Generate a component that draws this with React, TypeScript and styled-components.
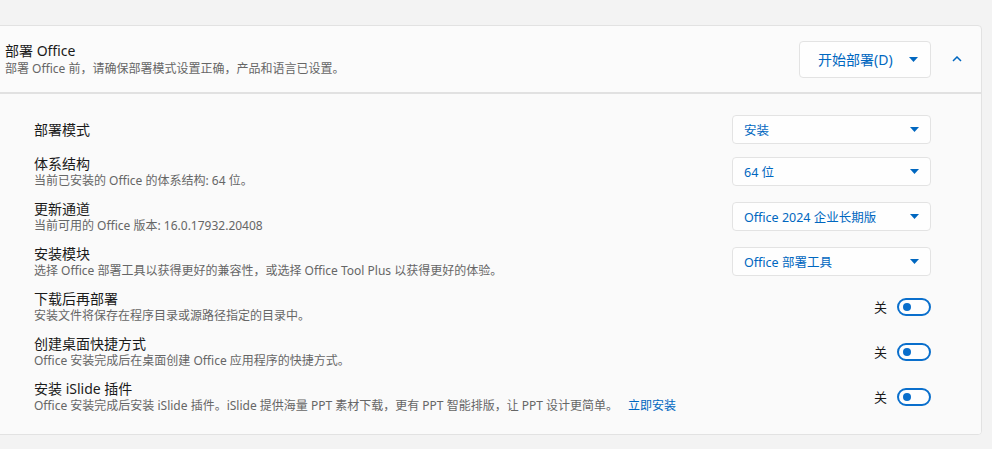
import React from "react";
import styled, { createGlobalStyle } from "styled-components";

const Global = createGlobalStyle`
  html, body { margin: 0; padding: 0; background: #f3f3f3; }
  body {
    font-family: "Noto Sans", "Noto Sans CJK SC", sans-serif;
    color: #1b1b1b;
    overflow: hidden;
  }
`;

const Page = styled.div`
  width: 992px;
  height: 449px;
  padding: 25px 10px 0 0;
  box-sizing: border-box;
  overflow: hidden;
`;

const Card = styled.section`
  margin-left: -12px;
  border: 1px solid #e2e2e2;
  border-radius: 4px;
  background: #fbfbfb;
  overflow: hidden;
`;

const Header = styled.div`
  display: flex;
  align-items: center;
  height: 66px;
  padding: 0 12px 0 16px;
  border-bottom: 2px solid #e1e1e1;
  box-sizing: content-box;
`;

const HeaderText = styled.div`
  flex: 1;
  display: flex;
  flex-direction: column;
`;

const Title = styled.div`
  font-size: 14px;
  line-height: 20px;
  color: #1a1a1a;
`;

const Desc = styled.div`
  font-size: 12px;
  line-height: 16px;
  color: #666666;
`;

const SplitButton = styled.button`
  display: flex;
  align-items: center;
  width: 132px;
  height: 37px;
  padding: 0 12px 0 18px;
  box-sizing: border-box;
  border: 1px solid #e3e3e3;
  border-radius: 4px;
  background: #fefefe;
  font-family: inherit;
  font-size: 14px;
  color: #0067c0;
  cursor: pointer;
`;

const ButtonLabel = styled.span`
  flex: 1;
  text-align: left;
`;

const Chevron = styled.div`
  width: 24px;
  margin-left: 14px;
  display: flex;
  justify-content: center;
  align-items: center;
`;

const Body = styled.div`
  display: flex;
  flex-direction: column;
  gap: 10px;
  padding: 21px 50px 20px 45px;
  background: #fafafa;
`;

const Row = styled.div`
  display: flex;
  align-items: center;
  min-height: 29px;
`;

const RowText = styled.div`
  flex: 1;
  display: flex;
  flex-direction: column;
`;

const Label = styled.div`
  font-size: 14px;
  line-height: 19px;
  color: #1a1a1a;
`;

const RowDesc = styled.div`
  font-size: 12px;
  line-height: 16px;
  color: #666666;
`;

const Link = styled.a`
  color: #0067c0;
  margin-left: 10px;
  text-decoration: none;
`;

const Select = styled.div`
  display: flex;
  align-items: center;
  width: 199px;
  height: 29px;
  box-sizing: border-box;
  padding: 0 11px 0 11px;
  border: 1px solid #e3e3e3;
  border-radius: 4px;
  background: #fefefe;
  font-size: 12.5px;
  color: #0067c0;
`;

const SelectValue = styled.span`
  flex: 1;
`;

const ToggleWrap = styled.div`
  display: flex;
  align-items: center;
  gap: 10px;
`;

const ToggleText = styled.span`
  font-size: 13px;
  color: #1a1a1a;
`;

const Toggle = styled.div`
  position: relative;
  width: 34px;
  height: 18px;
  box-sizing: border-box;
  border: 2px solid #0a6fcc;
  border-radius: 9px;
  background: #fefefe;
  &::after {
    content: "";
    position: absolute;
    left: 4px;
    top: 3px;
    width: 8px;
    height: 8px;
    border-radius: 50%;
    background: #0a6fcc;
  }
`;

const Caret = () => (
  <svg width="9" height="5" viewBox="0 0 9 5">
    <path d="M0 0 H9 L4.5 5 Z" fill="#0067c0" />
  </svg>
);

const ChevronUp = () => (
  <svg width="10" height="6" viewBox="0 0 10 6">
    <path d="M1 5 L5 1 L9 5" fill="none" stroke="#0067c0" strokeWidth="1.5" />
  </svg>
);

type SelectRow = { kind: "select"; label: string; desc?: React.ReactNode; value: string };
type ToggleRow = { kind: "toggle"; label: string; desc: React.ReactNode };

const rows: (SelectRow | ToggleRow)[] = [
  { kind: "select", label: "部署模式", value: "安装" },
  { kind: "select", label: "体系结构", desc: "当前已安装的 Office 的体系结构: 64 位。", value: "64 位" },
  { kind: "select", label: "更新通道", desc: "当前可用的 Office 版本: 16.0.17932.20408", value: "Office 2024 企业长期版" },
  {
    kind: "select",
    label: "安装模块",
    desc: "选择 Office 部署工具以获得更好的兼容性，或选择 Office Tool Plus 以获得更好的体验。",
    value: "Office 部署工具",
  },
  { kind: "toggle", label: "下载后再部署", desc: "安装文件将保存在程序目录或源路径指定的目录中。" },
  { kind: "toggle", label: "创建桌面快捷方式", desc: "Office 安装完成后在桌面创建 Office 应用程序的快捷方式。" },
  {
    kind: "toggle",
    label: "安装 iSlide 插件",
    desc: (
      <>
        Office 安装完成后安装 iSlide 插件。iSlide 提供海量 PPT 素材下载，更有 PPT 智能排版，让 PPT 设计更简单。
        <Link href="#">立即安装</Link>
      </>
    ),
  },
];

export default function App() {
  return (
    <>
      <Global />
      <Page>
        <Card>
          <Header>
            <HeaderText>
              <Title>部署 Office</Title>
              <Desc>部署 Office 前，请确保部署模式设置正确，产品和语言已设置。</Desc>
            </HeaderText>
            <SplitButton>
              <ButtonLabel>开始部署(D)</ButtonLabel>
              <Caret />
            </SplitButton>
            <Chevron>
              <ChevronUp />
            </Chevron>
          </Header>
          <Body>
            {rows.map((r, i) => (
              <Row key={i}>
                <RowText>
                  <Label>{r.label}</Label>
                  {r.desc && <RowDesc>{r.desc}</RowDesc>}
                </RowText>
                {r.kind === "select" ? (
                  <Select>
                    <SelectValue>{r.value}</SelectValue>
                    <Caret />
                  </Select>
                ) : (
                  <ToggleWrap>
                    <ToggleText>关</ToggleText>
                    <Toggle />
                  </ToggleWrap>
                )}
              </Row>
            ))}
          </Body>
        </Card>
      </Page>
    </>
  );
}
